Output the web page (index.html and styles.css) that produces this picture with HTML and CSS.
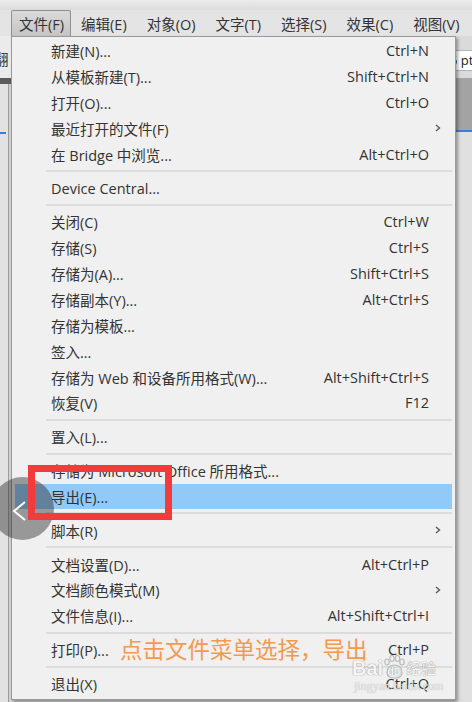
FILE: index.html
```html
<!DOCTYPE html>
<html lang="zh-CN">
<head>
<meta charset="utf-8">
<title>文件菜单</title>
<link rel="stylesheet" href="styles.css">
</head>
<body>
<div class="screen">
  <div class="topstrip"></div>
  <div class="menubar">
    <span class="mb-item active">文件(F)</span>
    <span class="mb-item">编辑(E)</span>
    <span class="mb-item">对象(O)</span>
    <span class="mb-item">文字(T)</span>
    <span class="mb-item">选择(S)</span>
    <span class="mb-item">效果(C)</span>
    <span class="mb-item">视图(V)</span>
  </div>
  <div class="body">
    <div class="side-left">
      <div class="sl-top"><span class="clip-char">翻</span></div>
      <div class="sl-bar"></div>
      <div class="sl-main">
        <div class="sl-col1"><div class="sl-blue"></div></div>
        <div class="sl-line"></div>
        <div class="sl-col2"></div>
      </div>
    </div>
    <div class="menu">
      <div class="row"><span class="label">新建(N)...</span><span class="key">Ctrl+N</span><span class="sub"></span></div>
      <div class="row"><span class="label">从模板新建(T)...</span><span class="key">Shift+Ctrl+N</span><span class="sub"></span></div>
      <div class="row"><span class="label">打开(O)...</span><span class="key">Ctrl+O</span><span class="sub"></span></div>
      <div class="row"><span class="label">最近打开的文件(F)</span><span class="key"></span><span class="sub"><svg class="arrow" width="6" height="8" viewBox="0 0 6 8"><polyline points="1,1 4.5,4 1,7" fill="none" stroke="#5a5a5a" stroke-width="1.4"/></svg></span></div>
      <div class="row"><span class="label">在 Bridge 中浏览...</span><span class="key">Alt+Ctrl+O</span><span class="sub"></span></div>
      <div class="sep"></div>
      <div class="row"><span class="label">Device Central...</span><span class="key"></span><span class="sub"></span></div>
      <div class="sep"></div>
      <div class="row"><span class="label">关闭(C)</span><span class="key">Ctrl+W</span><span class="sub"></span></div>
      <div class="row"><span class="label">存储(S)</span><span class="key">Ctrl+S</span><span class="sub"></span></div>
      <div class="row"><span class="label">存储为(A)...</span><span class="key">Shift+Ctrl+S</span><span class="sub"></span></div>
      <div class="row"><span class="label">存储副本(Y)...</span><span class="key">Alt+Ctrl+S</span><span class="sub"></span></div>
      <div class="row"><span class="label">存储为模板...</span><span class="key"></span><span class="sub"></span></div>
      <div class="row"><span class="label">签入...</span><span class="key"></span><span class="sub"></span></div>
      <div class="row"><span class="label">存储为 Web 和设备所用格式(W)...</span><span class="key">Alt+Shift+Ctrl+S</span><span class="sub"></span></div>
      <div class="row"><span class="label">恢复(V)</span><span class="key">F12</span><span class="sub"></span></div>
      <div class="sep"></div>
      <div class="row"><span class="label">置入(L)...</span><span class="key"></span><span class="sub"></span></div>
      <div class="sep"></div>
      <div class="row"><span class="label">存储为 Microsoft Office 所用格式...</span><span class="key"></span><span class="sub"></span></div>
      <div class="row hl"><span class="label">导出(E)...</span><span class="key"></span><span class="sub"></span></div>
      <div class="sep"></div>
      <div class="row"><span class="label">脚本(R)</span><span class="key"></span><span class="sub"><svg class="arrow" width="6" height="8" viewBox="0 0 6 8"><polyline points="1,1 4.5,4 1,7" fill="none" stroke="#5a5a5a" stroke-width="1.4"/></svg></span></div>
      <div class="sep"></div>
      <div class="row"><span class="label">文档设置(D)...</span><span class="key">Alt+Ctrl+P</span><span class="sub"></span></div>
      <div class="row"><span class="label">文档颜色模式(M)</span><span class="key"></span><span class="sub"><svg class="arrow" width="6" height="8" viewBox="0 0 6 8"><polyline points="1,1 4.5,4 1,7" fill="none" stroke="#5a5a5a" stroke-width="1.4"/></svg></span></div>
      <div class="row"><span class="label">文件信息(I)...</span><span class="key">Alt+Shift+Ctrl+I</span><span class="sub"></span></div>
      <div class="sep"></div>
      <div class="row"><span class="label">打印(P)...</span><span class="key">Ctrl+P</span><span class="sub"></span></div>
      <div class="sep"></div>
      <div class="row"><span class="label">退出(X)</span><span class="key">Ctrl+Q</span><span class="sub"></span></div>
    </div>
    <div class="side-right">
      <div class="sr-a"></div>
      <div class="sr-field"><span class="sr-text">5 pt</span></div>
      <div class="sr-b"></div>
      <div class="sr-dark"></div>
      <div class="sr-blue"></div>
      <div class="sr-rest"></div>
    </div>
  </div>

  <div class="red-box"></div>
  <div class="nav-circle">
    <svg width="63" height="63" viewBox="0 0 63 63"><polyline points="34,25 23,34 34,43" fill="none" stroke="#ffffff" stroke-width="2"/></svg>
  </div>
  <div class="caption">点击文件菜单选择，导出</div>
  <div class="wm">
    <div class="wm-line">
      <span class="wm-bai">Bai</span>
      <span class="wm-paw">
        <svg width="22" height="24" viewBox="0 0 22 24">
          <g fill="none" stroke="#b0b0b0" stroke-width="1.2">
            <ellipse cx="4" cy="7" rx="2.2" ry="3"/>
            <ellipse cx="9" cy="3.5" rx="2.2" ry="3"/>
            <ellipse cx="14.5" cy="3.5" rx="2.2" ry="3"/>
            <ellipse cx="19" cy="7" rx="2.2" ry="3"/>
            <path d="M4 18 C4 12 8 10 11.5 10 C15 10 19 12 19 18 C19 22 15 23 11.5 23 C8 23 4 22 4 18 Z"/>
          </g>
        </svg>
        <span class="wm-du">du</span>
      </span>
      <span class="wm-jy">经验</span>
    </div>
    <div class="wm-url">jingyan.baidu.com</div>
  </div>
</div>
</body>
</html>
```

FILE: styles.css
```css
body {
  margin: 0;
  background: #d4d4d4;
}

.screen {
  width: 472px;
  height: 702px;
  position: relative;
  overflow: hidden;
  background: #d4d4d4;
  font-family: "Open Sans", "Noto Sans CJK SC", sans-serif;
  font-size: 14.5px;
  color: #333333;
}

.topstrip {
  height: 10px;
  background: linear-gradient(#ececec, #dcdcdc);
}

.menubar {
  height: 26px;
  display: flex;
  align-items: flex-end;
  padding-left: 11px;
  background: #e4e4e4;
}

.mb-item {
  height: 26px;
  box-sizing: border-box;
  padding: 0 9px;
  border: 1px solid transparent;
  border-bottom: 0;
  display: flex;
  align-items: center;
  white-space: nowrap;
  color: #333333;
}

.mb-item.active {
  padding: 0 6px 0 7px;
  background: linear-gradient(#dadada, #c5c5c5);
  border-color: #8f8f8f;
  border-radius: 2px 2px 0 0;
}

.body {
  display: flex;
  height: 666px;
}

/* left background strip */
.side-left {
  width: 11px;
  flex: none;
  display: flex;
  flex-direction: column;
}

.sl-top {
  height: 42px;
  background: #ebebeb;
  overflow: hidden;
  white-space: nowrap;
  padding-top: 14px;
  box-sizing: border-box;
}

.clip-char {
  display: inline-block;
  margin-left: -6px;
  line-height: 16px;
  color: #333333;
}

.sl-bar {
  height: 6px;
  background: #5c5c5c;
}

.sl-main {
  flex: 1;
  display: flex;
}

.sl-col1 {
  width: 8px;
  background: #e2e2e2;
}

.sl-blue {
  margin-top: 48px;
  height: 2px;
  width: 6px;
  background: #3d7fd6;
}

.sl-line {
  width: 1px;
  background: #9d9d9d;
}

.sl-col2 {
  flex: 1;
  background: #d2d2d2;
}

/* menu */
.menu {
  width: 445px;
  flex: none;
  box-sizing: border-box;
  align-self: flex-start;
  border: 1px solid #9a9a9a;
  background: #f0f0f0;
  padding: 1px 0 2.5px;
  box-shadow: 2px 2px 3px rgba(0, 0, 0, 0.35);
  position: relative;
  z-index: 1;
}

.row {
  display: flex;
  align-items: center;
  height: 25.85px;
  margin: 0 3px;
  padding-left: 36px;
  white-space: nowrap;
}

.row .label {
  flex: 1;
}

.row .sub {
  width: 23px;
  flex: none;
  box-sizing: border-box;
  padding-left: 6px;
  display: flex;
  align-items: center;
}

.row.hl {
  background: #91c9f7;
}

.sep {
  height: 2px;
  background: #dcdcdc;
  margin: 3px 3px 3px 34px;
}

/* right background strip */
.side-right {
  flex: 1;
  display: flex;
  flex-direction: column;
}

.sr-a {
  height: 14px;
  background: #dadada;
}

.sr-field {
  height: 21px;
  box-sizing: border-box;
  background: #ffffff;
  border-top: 1px solid #b5b5b5;
  border-bottom: 1px solid #b5b5b5;
  overflow: hidden;
  white-space: nowrap;
  font-size: 13px;
  line-height: 19px;
}

.sr-text {
  display: inline-block;
  margin-left: -6px;
  color: #222222;
}

.sr-b {
  height: 7px;
  background: #dadada;
}

.sr-dark {
  height: 52px;
  background: #a3a3a3;
}

.sr-blue {
  height: 2px;
  background: #3d7fd6;
}

.sr-rest {
  flex: 1;
  background: #e0e0e0;
}

/* overlays */
.red-box {
  position: absolute;
  left: 28px;
  top: 465px;
  width: 144px;
  height: 55px;
  box-sizing: border-box;
  border: 7px solid #f43b3b;
  z-index: 3;
}

.nav-circle {
  position: absolute;
  left: -9px;
  top: 477px;
  width: 63px;
  height: 63px;
  border-radius: 50%;
  background: rgba(30, 30, 30, 0.42);
  z-index: 2;
}

.nav-circle svg {
  display: block;
}

.caption {
  position: absolute;
  left: 120px;
  top: 635px;
  font-family: "Noto Sans CJK SC", sans-serif;
  font-size: 22.5px;
  line-height: 26px;
  color: #f39a4e;
  white-space: nowrap;
  z-index: 3;
}

.wm {
  position: absolute;
  left: 352px;
  top: 654px;
  z-index: 4;
  opacity: 0.85;
}

.wm-line {
  display: flex;
  align-items: flex-end;
  height: 25px;
}

.wm-bai {
  font-family: "Liberation Sans", sans-serif;
  font-weight: bold;
  font-size: 20px;
  line-height: 22px;
  color: #f6f6f6;
  text-shadow: 0 0 1px #8a8a8a, 0 0 1px #8a8a8a;
}

.wm-paw {
  position: relative;
  display: inline-block;
  width: 22px;
  height: 24px;
}

.wm-paw svg {
  display: block;
}

.wm-du {
  position: absolute;
  left: 4px;
  top: 10px;
  font-family: "Liberation Sans", sans-serif;
  font-weight: bold;
  font-size: 11px;
  color: #f6f6f6;
  text-shadow: 0 0 1px #8a8a8a, 0 0 1px #8a8a8a;
}

.wm-jy {
  font-family: "Noto Sans CJK SC", sans-serif;
  font-size: 15px;
  line-height: 22px;
  color: #f6f6f6;
  text-shadow: 0 0 1px #8a8a8a, 0 0 1px #8a8a8a;
  margin-left: 1px;
}

.wm-url {
  font-family: "Liberation Serif", serif;
  font-size: 12px;
  line-height: 14px;
  color: #e6e6e6;
  text-shadow: 0 0 1px #a8a8a8;
  margin-left: 2px;
}
```
